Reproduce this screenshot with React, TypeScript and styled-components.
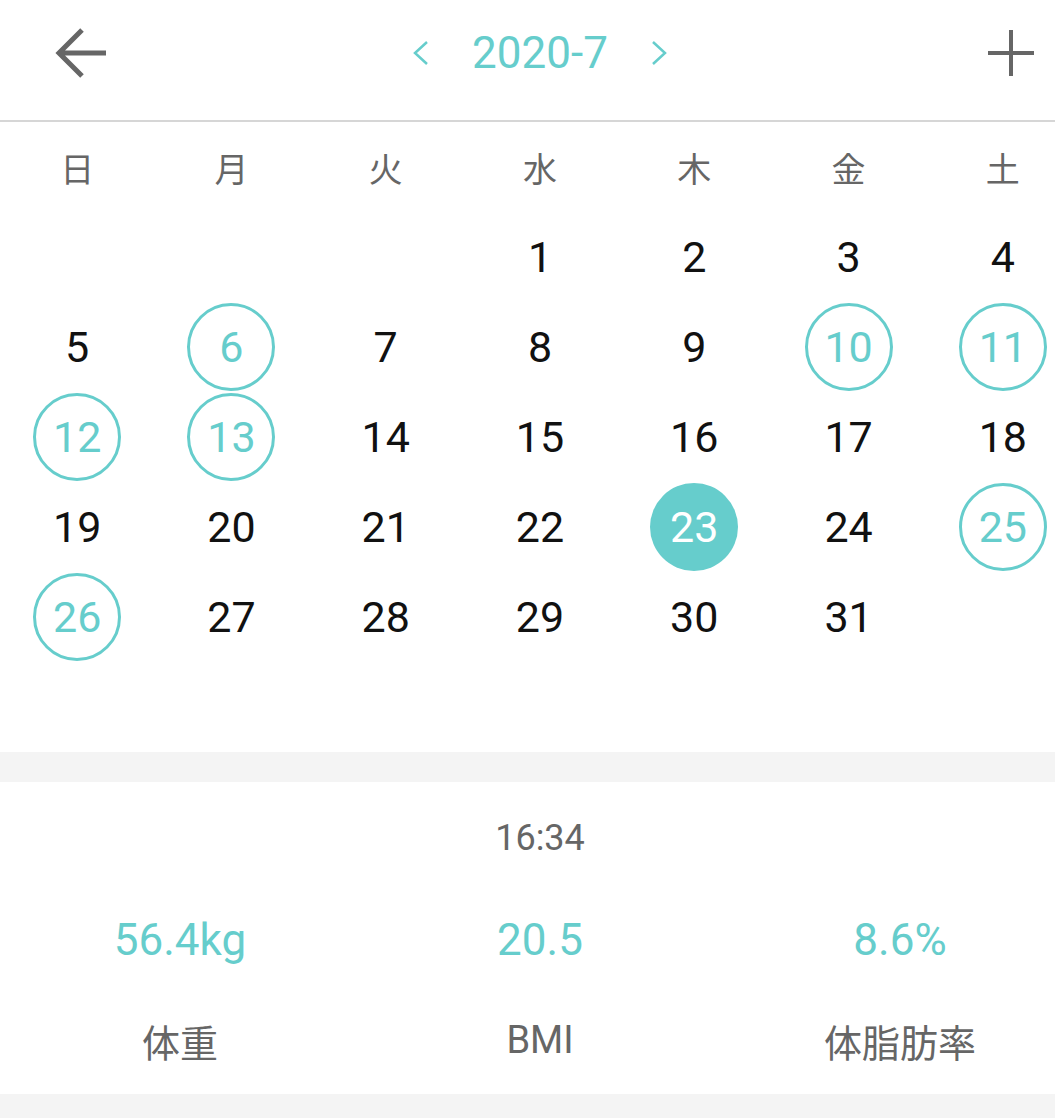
import React from 'react';
import styled, { createGlobalStyle } from 'styled-components';

const teal = '#66cdcc';
const gray = '#666666';

const GlobalStyle = createGlobalStyle`
    html, body {
        margin: 0;
        padding: 0;
        background: #f4f4f4;
        overflow: hidden;
    }
    body {
        font-family: Roboto, "Noto Sans CJK JP", "Noto Sans", sans-serif;
    }
`;

const weekdays = ['日', '月', '火', '水', '木', '金', '土'];
const marked = [6, 10, 11, 12, 13, 25, 26];
const today = 23;
const firstWeekday = 3;

const stats = [
    { value: '56.4kg', label: '体重' },
    { value: '20.5', label: 'BMI' },
    { value: '8.6%', label: '体脂肪率' },
];

export default function App() {
    const cells: (number | null)[] = [];
    for (let i = 0; i < firstWeekday; i++) cells.push(null);
    for (let d = 1; d <= 31; d++) cells.push(d);

    return (
        <Screen>
            <GlobalStyle />
            <Header>
                <IconButton>
                    <svg width="54" height="54" viewBox="0 0 54 54">
                        <path d="M28 4 L5 27 L28 50 M5 27 H52" fill="none" stroke={gray} strokeWidth="5" />
                    </svg>
                </IconButton>
                <MonthSwitch>
                    <svg width="16" height="26" viewBox="0 0 16 26">
                        <path d="M14 2 L2 13 L14 24" fill="none" stroke={teal} strokeWidth="2.5" />
                    </svg>
                    <MonthTitle>2020-7</MonthTitle>
                    <svg width="16" height="26" viewBox="0 0 16 26">
                        <path d="M2 2 L14 13 L2 24" fill="none" stroke={teal} strokeWidth="2.5" />
                    </svg>
                </MonthSwitch>
                <IconButton $right>
                    <svg width="50" height="50" viewBox="0 0 50 50">
                        <path d="M25 2 V48 M2 25 H48" fill="none" stroke={gray} strokeWidth="4" />
                    </svg>
                </IconButton>
            </Header>

            <Calendar>
                <Grid>
                    {weekdays.map(w => (
                        <Weekday key={w}>{w}</Weekday>
                    ))}
                    {cells.map((d, i) => (
                        <DayCell key={i}>
                            {d !== null && (
                                <Day
                                    $mode={d === today ? 'today' : marked.includes(d) ? 'marked' : 'plain'}
                                >
                                    {d}
                                </Day>
                            )}
                        </DayCell>
                    ))}
                </Grid>
            </Calendar>

            <Summary>
                <Time>16:34</Time>
                <StatRow>
                    {stats.map(s => (
                        <StatValue key={s.label}>{s.value}</StatValue>
                    ))}
                </StatRow>
                <StatRow $labels>
                    {stats.map(s => (
                        <StatLabel key={s.label}>{s.label}</StatLabel>
                    ))}
                </StatRow>
            </Summary>
        </Screen>
    );
}

const Screen = styled.div`
    width: 1080px;
`;

const Header = styled.header`
    height: 122px;
    box-sizing: border-box;
    display: grid;
    grid-template-columns: 1fr auto 1fr;
    align-items: center;
    padding: 0 44px 14px 44px;
    background: #fff;
    border-bottom: 2px solid #d6d6d6;
`;

const IconButton = styled.div<{ $right?: boolean }>`
    display: flex;
    align-items: center;
    justify-content: ${p => (p.$right ? 'flex-end' : 'flex-start')};
    padding-left: ${p => (p.$right ? 0 : 10)}px;
`;

const MonthSwitch = styled.div`
    display: flex;
    align-items: center;
    gap: 43px;
`;

const MonthTitle = styled.div`
    font-size: 44px;
    color: ${teal};
    line-height: 1;
`;

const Calendar = styled.section`
    background: #fff;
    padding-bottom: 90px;
    margin-bottom: 30px;
`;

const Grid = styled.div`
    display: grid;
    grid-template-columns: repeat(7, 1fr);
    grid-auto-rows: 90px;
`;

const Weekday = styled.div`
    display: flex;
    align-items: center;
    justify-content: center;
    font-size: 34px;
    color: ${gray};
    font-family: "Noto Sans CJK JP", sans-serif;
`;

const DayCell = styled.div`
    display: flex;
    align-items: center;
    justify-content: center;
`;

const Day = styled.div<{ $mode: 'plain' | 'marked' | 'today' }>`
    width: 88px;
    height: 88px;
    box-sizing: border-box;
    border-radius: 50%;
    display: flex;
    align-items: center;
    justify-content: center;
    font-size: 43px;
    color: ${p => (p.$mode === 'plain' ? '#111' : p.$mode === 'today' ? '#fff' : teal)};
    background: ${p => (p.$mode === 'today' ? teal : 'transparent')};
    border: ${p => (p.$mode === 'marked' ? `3px solid ${teal}` : 'none')};
`;

const Summary = styled.section`
    background: #fff;
    height: 312px;
    display: flex;
    flex-direction: column;
`;

const Time = styled.div`
    height: 112px;
    display: flex;
    align-items: center;
    justify-content: center;
    font-size: 36px;
    color: ${gray};
`;

const StatRow = styled.div<{ $labels?: boolean }>`
    height: ${p => (p.$labels ? 108 : 92)}px;
    display: grid;
    grid-template-columns: repeat(3, 1fr);
    align-items: center;
    justify-items: center;
`;

const StatValue = styled.div`
    font-size: 44px;
    color: ${teal};
`;

const StatLabel = styled.div`
    font-size: 38px;
    color: ${gray};
`;
